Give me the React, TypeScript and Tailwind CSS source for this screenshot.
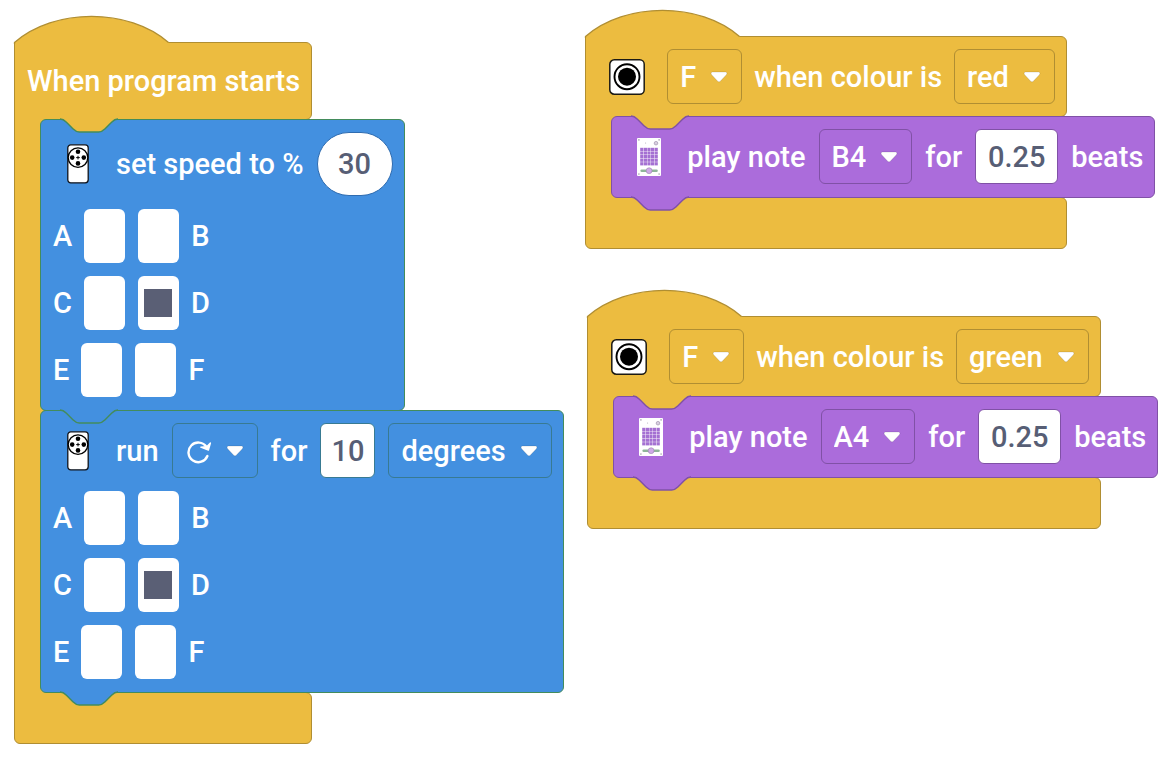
import type { ReactNode } from "react";

type Tone = "event" | "motor" | "music";

const tones: Record<Tone, { block: string; field: string; fill: string; line: string }> = {
  event: { block: "bg-[#ecbc40] border-[#b08e32]", field: "bg-[#ecbc40] border-[#b08e32]", fill: "#ecbc40", line: "#b08e32" },
  motor: { block: "bg-[#4390e0] border-[#438c5c]", field: "bg-[#4390e0] border-[#387a92]", fill: "#4390e0", line: "#438c5c" },
  music: { block: "bg-[#ab6cdb] border-[#8051a6]", field: "bg-[#ab6cdb] border-[#8051a6]", fill: "#ab6cdb", line: "#8051a6" },
};

function Connector({ fill, line, place }: { fill: string; line: string; place: string }) {
  return (
    <svg aria-hidden="true" className={`absolute left-[19px] z-10 overflow-visible ${place}`} width="58" height="13" viewBox="0 0 36 8">
      <path d="M0-.4C2 0 3 1 4 2L8 6C9 7 10 8 12 8H24C26 8 27 7 28 6L32 2C33 1 34 0 36-.4V-.7H0Z" fill={fill} />
      <path d="M0 0C2 0 3 1 4 2L8 6C9 7 10 8 12 8H24C26 8 27 7 28 6L32 2C33 1 34 0 36 0" fill="none" stroke={line} strokeWidth=".9" />
    </svg>
  );
}

function Chevron() {
  return (
    <svg aria-hidden="true" width="18" height="12" viewBox="0 0 18 12">
      <path
        d="M2.5 1H15.5C17 1 17.4 2.6 16.4 3.7L10.3 10.3C9.5 11 8.5 11 7.7 10.3L1.6 3.7C.6 2.6 1 1 2.5 1Z"
        fill="#fff"
        stroke="#000"
        strokeOpacity=".15"
        strokeWidth=".8"
      />
    </svg>
  );
}

function Dropdown({ label, options, tone }: { label: string; options: string[]; tone: Tone }) {
  return (
    <div className="grid items-center">
      <select
        aria-label={label}
        className={`col-start-1 row-start-1 h-[55px] field-sizing-content appearance-none rounded-md border pr-[45px] pl-3 ${tones[tone].field}`}
      >
        {options.map((o) => (
          <option key={o}>{o}</option>
        ))}
      </select>
      <span className="pointer-events-none col-start-1 row-start-1 mr-[14px] justify-self-end">
        <Chevron />
      </span>
    </div>
  );
}

function DirectionDropdown() {
  return (
    <div className="grid items-center">
      <select
        aria-label="direction"
        className="col-start-1 row-start-1 h-[55px] w-[86px] appearance-none rounded-md border border-[#387a92] bg-[#4390e0] text-transparent"
      >
        <option>↻</option>
      </select>
      <span className="pointer-events-none col-start-1 row-start-1 flex items-center justify-between pr-[14px] pl-[14px]">
        <svg aria-hidden="true" width="26" height="26" viewBox="0 0 26 26" fill="none" stroke="#fff">
          <path d="M21.4 18A9.8 9.8 0 1 1 20.4 8.8" strokeWidth="2.4" strokeLinecap="round" />
          <path d="M24.4 5L22.4 12L14.8 9.2L21 8.6Z" fill="#fff" strokeWidth="1.4" strokeLinejoin="round" />
        </svg>
        <Chevron />
      </span>
    </div>
  );
}

function NumberField({ label, value, shape }: { label: string; value: string; shape: string }) {
  return (
    <input
      aria-label={label}
      defaultValue={value}
      inputMode="decimal"
      className={`border bg-white text-center text-[#575e75] ${shape}`}
    />
  );
}

function IconSlot({ children }: { children: ReactNode }) {
  return <span className="flex w-[50px] shrink-0 justify-center">{children}</span>;
}

function MotorIcon() {
  return (
    <svg aria-label="motor" width="22" height="40" viewBox="0 0 22 40">
      <rect x=".8" y=".8" width="20.4" height="38" rx="3" fill="#fff" stroke="#10131a" strokeWidth="1.3" />
      <circle cx="11" cy="13.6" r="9.8" fill="#fff" stroke="#000" strokeWidth="1.3" />
      <path d="M11 11.8v3.6M9.2 13.6h3.6" stroke="#000" strokeWidth="1" />
      <circle cx="11" cy="7.8" r="2.3" />
      <circle cx="11" cy="19.4" r="2.3" />
      <circle cx="5.2" cy="13.6" r="2.3" />
      <circle cx="16.8" cy="13.6" r="2.3" />
    </svg>
  );
}

function ColourSensorIcon() {
  return (
    <svg aria-label="colour sensor" width="36" height="36" viewBox="0 0 36 36">
      <rect x=".8" y=".8" width="34.4" height="34.4" rx="4.5" fill="#fff" stroke="#1c1a14" strokeWidth="1.5" />
      <circle cx="18" cy="17.7" r="12.5" fill="none" stroke="#000" strokeWidth="1.9" />
      <circle cx="18" cy="17.7" r="9" />
    </svg>
  );
}

function DisplayIcon() {
  const cells = [0, 1, 2, 3, 4];
  return (
    <svg aria-label="light matrix" width="24" height="38" viewBox="0 0 24 38">
      <rect width="24" height="38" rx="1" fill="#fff" />
      <g fill="#a470d2">
        {cells.map((r) => cells.map((c) => <rect key={`${r}-${c}`} x={3.2 + c * 3.6} y={9.8 + r * 3.6} width="3.2" height="3.2" />))}
      </g>
      <g fill="#a9a3b0">
        <circle cx="1.9" cy="1.9" r=".8" />
        <circle cx="22.1" cy="1.9" r=".8" />
        <circle cx="1.9" cy="36.1" r=".8" />
        <circle cx="22.1" cy="36.1" r=".8" />
        <circle cx="8.6" cy="5" r=".5" />
      </g>
      <circle cx="19" cy="5.2" r="1.8" fill="#d8cfe0" stroke="#a295b0" strokeWidth=".7" />
      <rect x="3.4" y="31.4" width="17.4" height="2.6" rx="1.3" fill="#8fb59a" />
      <circle cx="12.1" cy="32.7" r="2.9" fill="#cfaae8" stroke="#a58bb8" strokeWidth=".7" />
    </svg>
  );
}

function Port({ id, name, on }: { id: string; name: string; on?: boolean }) {
  return (
    <input
      id={id}
      type="checkbox"
      defaultChecked={on}
      aria-label={`port ${name}`}
      className="grid h-[54px] w-[41px] appearance-none place-content-center rounded-md bg-white checked:before:block checked:before:size-7 checked:before:bg-[#5a5f75] checked:before:content-['']"
    />
  );
}

function Ports({ prefix, selected }: { prefix: string; selected: string }) {
  const pairs = [["A", "B"], ["C", "D"], ["E", "F"]];
  return (
    <>
      {pairs.map(([l, r]) => (
        <div key={l} className="flex items-center gap-3">
          <label htmlFor={prefix + l}>{l}</label>
          <div className="flex gap-[13px]">
            <Port id={prefix + l} name={l} on={selected === l} />
            <Port id={prefix + r} name={r} on={selected === r} />
          </div>
          <label htmlFor={prefix + r}>{r}</label>
        </div>
      ))}
    </>
  );
}

function Row({ children }: { children: ReactNode }) {
  return <div className="flex items-center gap-[13px]">{children}</div>;
}

function Block({ tone, notch, children }: { tone: Tone; notch?: Tone; children: ReactNode }) {
  const t = tones[tone];
  return (
    <div className={`relative flex w-max flex-col gap-[13px] rounded-md border pt-3 pr-[11px] pb-[13px] pl-3 ${t.block}`}>
      {notch && <Connector fill={tones[notch].fill} line={t.line} place="-top-px" />}
      {children}
      <Connector fill={t.fill} line={t.line} place="top-full" />
    </div>
  );
}

function EventStack({ header, children }: { header: ReactNode; children: ReactNode }) {
  return (
    <section className="flex w-max flex-col">
      <svg aria-hidden="true" className="relative z-10 -mb-0.5 overflow-visible" width="155" height="28" viewBox="0 0 155 28">
        <path d="M.5 28V26.5C40.5-8.3 114.5-8.3 154.5 26.5V28Z" fill="#ecbc40" />
        <path d="M.5 28V26.5C40.5-8.3 114.5-8.3 154.5 26.5" fill="none" stroke="#b08e32" strokeWidth="1.3" />
      </svg>
      <div className="rounded-r-md border border-[#b08e32] bg-[#ecbc40] pr-[11px] pl-3">{header}</div>
      <div className="relative z-10 -mt-px flex w-0">
        <div className="w-[34px] shrink-0 border-l border-[#b08e32] bg-[#ecbc40]" />
        <div className="-ml-2 flex flex-col -space-y-px">{children}</div>
      </div>
      <div className="-mt-px h-[52px] rounded-md rounded-tl-none border border-[#b08e32] bg-[#ecbc40]" />
    </section>
  );
}

function ColourStack({ colour, note }: { colour: string; note: string }) {
  return (
    <EventStack
      header={
        <div className="flex h-[79px] items-center gap-3">
          <span className="flex w-[57px] justify-center">
            <ColourSensorIcon />
          </span>
          <Dropdown tone="event" label="sensor port" options={["F"]} />
          <span>when colour is</span>
          <Dropdown tone="event" label="colour" options={[colour]} />
        </div>
      }
    >
      <Block tone="music" notch="event">
        <Row>
          <IconSlot>
            <DisplayIcon />
          </IconSlot>
          <span>play note</span>
          <Dropdown tone="music" label="note" options={[note]} />
          <span>for</span>
          <NumberField label="beats" value="0.25" shape="h-[55px] w-[83px] rounded-md border-[#8051a6]" />
          <span>beats</span>
        </Row>
      </Block>
    </EventStack>
  );
}

export default function App() {
  return (
    <main className="flex min-h-screen items-start gap-[273px] bg-white pl-[14px] font-['Roboto',sans-serif] text-[29px] leading-8 font-medium whitespace-nowrap text-white">
      <div className="pt-4">
        <EventStack header={<div className="flex h-[76px] items-center">When program starts</div>}>
          <Block tone="motor" notch="event">
            <Row>
              <IconSlot>
                <MotorIcon />
              </IconSlot>
              <span>set speed to %</span>
              <NumberField label="speed" value="30" shape="h-[64px] w-[76px] rounded-full border-[#2f6cb0]" />
            </Row>
            <Ports prefix="speed-" selected="D" />
          </Block>
          <Block tone="motor">
            <Row>
              <IconSlot>
                <MotorIcon />
              </IconSlot>
              <span>run</span>
              <DirectionDropdown />
              <span>for</span>
              <NumberField label="amount" value="10" shape="h-[55px] w-[55px] rounded-md border-[#387a92]" />
              <Dropdown tone="motor" label="unit" options={["degrees"]} />
            </Row>
            <Ports prefix="run-" selected="D" />
          </Block>
        </EventStack>
      </div>
      <div className="flex flex-col gap-[41px] pt-2.5">
        <ColourStack colour="red" note="B4" />
        <div className="pl-0.5">
          <ColourStack colour="green" note="A4" />
        </div>
      </div>
    </main>
  );
}
